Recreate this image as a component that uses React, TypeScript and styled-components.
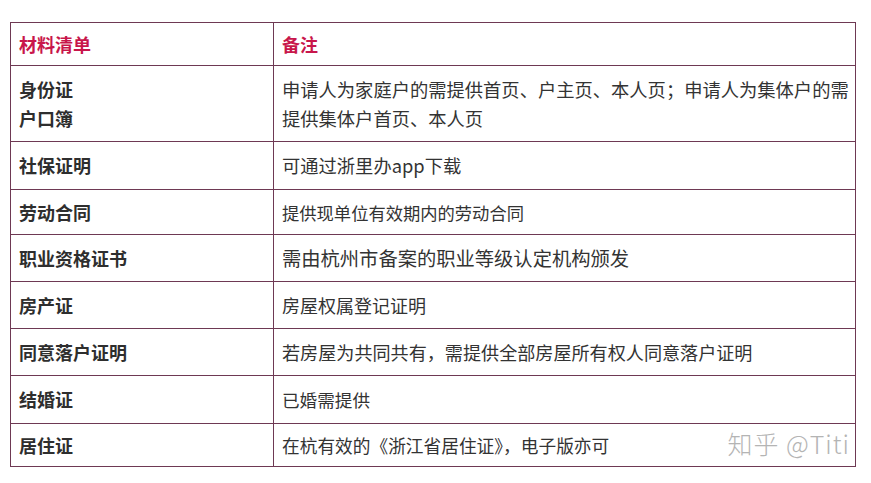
import React from 'react'
import styled, { createGlobalStyle } from 'styled-components';

const GlobalStyle = createGlobalStyle`
  body {
    margin: 0;
    background: #fff;
    font-family: "Noto Sans CJK SC", "Noto Sans", sans-serif;
  }
`

interface Row {
  name: string[];
  note: string;
  height: number;
  size?: number;
}

const rows: Row[] = [
  { name: ['身份证', '户口簿'], note: '申请人为家庭户的需提供首页、户主页、本人页；申请人为集体户的需提供集体户首页、本人页', height: 76, size: 18.3 },
  { name: ['社保证明'], note: '可通过浙里办app下载', height: 48, size: 18.3 },
  { name: ['劳动合同'], note: '提供现单位有效期内的劳动合同', height: 45, size: 17.3 },
  { name: ['职业资格证书'], note: '需由杭州市备案的职业等级认定机构颁发', height: 47, size: 19.3 },
  { name: ['房产证'], note: '房屋权属登记证明', height: 47 },
  { name: ['同意落户证明'], note: '若房屋为共同共有，需提供全部房屋所有权人同意落户证明', height: 47, size: 18.1 },
  { name: ['结婚证'], note: '已婚需提供', height: 48, size: 17.6 },
  { name: ['居住证'], note: '在杭有效的《浙江省居住证》，电子版亦可', height: 43, size: 17.7 },
]

const App: React.FC = () => {
  return (
    <>
      <GlobalStyle />
      <Page>
        <Wrap>
          <Table>
            <colgroup>
              <col style={{ width: 263 }} />
              <col />
            </colgroup>
            <tbody>
              <Tr h={43}>
                <HeadCell>材料清单</HeadCell>
                <HeadCell>备注</HeadCell>
              </Tr>
              {rows.map((r) => (
                <Tr h={r.height} key={r.name.join()}>
                  <NameCell>
                    {r.name.map((n) => <div key={n}>{n}</div>)}
                  </NameCell>
                  <NoteCell size={r.size ?? 18}>{r.note}</NoteCell>
                </Tr>
              ))}
            </tbody>
          </Table>
          <Watermark>知乎 @Titi</Watermark>
        </Wrap>
      </Page>
    </>
  )
}

export default App

const Page = styled.div`
  width: 871px;
  height: 483px;
  padding: 22px 0 0 10px;
  box-sizing: border-box;
`
const Wrap = styled.div`
  position: relative;
  width: 846px;
`
const Table = styled.table`
  width: 846px;
  border-collapse: collapse;
  table-layout: fixed;
  color: #333;
`
const Tr = styled.tr<{ h: number }>`
  height: ${(p) => p.h}px;
`
const Cell = styled.td`
  border: 1px solid #6e3953;
  padding: 0 8px;
  vertical-align: middle;
  line-height: 29px;
`
const HeadCell = styled(Cell)`
  color: #c8164b;
  font-weight: bold;
  font-size: 18px;
`
const NameCell = styled(Cell)`
  font-weight: bold;
  font-size: 18px;
  color: #2e2e2e;
`
const NoteCell = styled(Cell)<{ size: number }>`
  padding-right: 2px;
  font-size: ${(p) => p.size}px;
  color: #333;
`
const Watermark = styled.div`
  position: absolute;
  right: 6px;
  bottom: 6px;
  font-family: "Noto Sans CJK SC", sans-serif;
  font-weight: 300;
  font-size: 25px;
  color: #b4b4b4;
  text-shadow: 1px 1px 0 rgba(255, 255, 255, 0.9);
  letter-spacing: 1px;
`
